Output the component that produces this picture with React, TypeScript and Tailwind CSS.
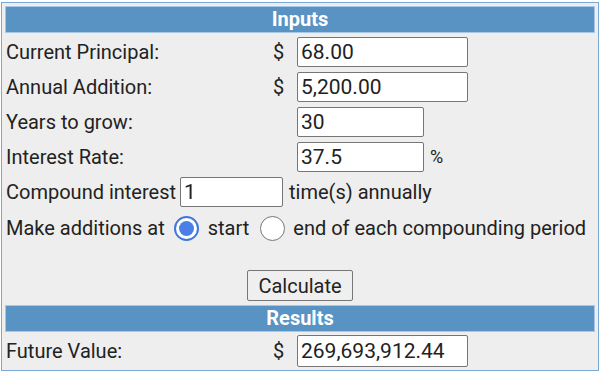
import React, { useState } from 'react';

const inputCls =
  'h-[30px] border border-[#767676] rounded-[2px] bg-white px-[3px] text-[21px] text-[#222] outline-none';

function Header({ title }: { title: string }) {
  return (
    <div className="h-[27px] border border-[#a9c8e6] bg-[#5893c4] text-white font-bold text-[20px] leading-[25px] text-center">
      {title}
    </div>
  );
}

function Radio({ checked, onClick }: { checked: boolean; onClick: () => void }) {
  return (
    <button
      onClick={onClick}
      className={`w-[25px] h-[25px] rounded-full flex items-center justify-center bg-white ${
        checked ? 'border-2 border-[#3d78e0]' : 'border-[1.5px] border-[#777]'
      }`}
    >
      {checked && <span className="w-[15px] h-[15px] rounded-full bg-[#4a80e6]" />}
    </button>
  );
}

export default function App() {
  const [principal, setPrincipal] = useState('68.00');
  const [addition, setAddition] = useState('5,200.00');
  const [years, setYears] = useState('30');
  const [rate, setRate] = useState('37.5');
  const [times, setTimes] = useState('1');
  const [at, setAt] = useState<'start' | 'end'>('start');

  return (
    <div
      className="w-[600px] h-[375px] bg-white pt-[2px] pl-[1px]"
      style={{ fontFamily: 'Roboto, "Liberation Sans", sans-serif' }}
    >
      <div className="w-[598px] border border-[#7aa9d6] bg-[#eeeeee] p-[3px] text-[20px] text-[#222] leading-none">
        <Header title="Inputs" />

        <div className="flex flex-col gap-[5px] mt-[4px]">
          {/* Current Principal */}
          <div className="flex items-center">
            <span className="w-[259px] pl-[1px]">Current Principal:</span>
            <span className="w-[29px] text-center">$</span>
            <input
              className={`${inputCls} ml-[4px] w-[171px]`}
              value={principal}
              onChange={(e) => setPrincipal(e.target.value)}
            />
          </div>

          {/* Annual Addition */}
          <div className="flex items-center">
            <span className="w-[259px] pl-[1px]">Annual Addition:</span>
            <span className="w-[29px] text-center">$</span>
            <input
              className={`${inputCls} ml-[4px] w-[171px]`}
              value={addition}
              onChange={(e) => setAddition(e.target.value)}
            />
          </div>

          {/* Years */}
          <div className="flex items-center">
            <span className="w-[259px] pl-[1px]">Years to grow:</span>
            <span className="w-[29px]" />
            <input
              className={`${inputCls} ml-[4px] w-[127px]`}
              value={years}
              onChange={(e) => setYears(e.target.value)}
            />
          </div>

          {/* Interest Rate */}
          <div className="flex items-center">
            <span className="w-[259px] pl-[1px]">Interest Rate:</span>
            <span className="w-[29px]" />
            <input
              className={`${inputCls} ml-[4px] w-[127px]`}
              value={rate}
              onChange={(e) => setRate(e.target.value)}
            />
            <span className="ml-[6px] text-[18px]">%</span>
          </div>

          {/* Compound */}
          <div className="flex items-center pl-[1px]">
            <span>Compound interest</span>
            <input
              className={`${inputCls} ml-[4px] w-[103px]`}
              value={times}
              onChange={(e) => setTimes(e.target.value)}
            />
            <span className="ml-[6px]">time(s) annually</span>
          </div>

          {/* Additions */}
          <div className="flex items-center h-[32px] pl-[1px]">
            <span>Make additions at</span>
            <span className="ml-[9px]">
              <Radio checked={at === 'start'} onClick={() => setAt('start')} />
            </span>
            <span className="ml-[9px]">start</span>
            <span className="ml-[11px]">
              <Radio checked={at === 'end'} onClick={() => setAt('end')} />
            </span>
            <span className="ml-[8px]">end of each compounding period</span>
          </div>
        </div>

        <div className="flex justify-center mt-[26px]">
          <button className="h-[31px] w-[106px] border border-[#767676] rounded-[2px] bg-[#efefef] text-[20px] text-[#222]">
            Calculate
          </button>
        </div>

        <div className="mt-[4px]">
          <Header title="Results" />
        </div>

        <div className="flex items-center mt-[3px]">
          <span className="w-[259px] pl-[1px]">Future Value:</span>
          <span className="w-[29px] text-center">$</span>
          <input
            className={`${inputCls} ml-[4px] w-[171px] h-[32px]`}
            value="269,693,912.44"
            readOnly
          />
        </div>
      </div>
    </div>
  );
}
